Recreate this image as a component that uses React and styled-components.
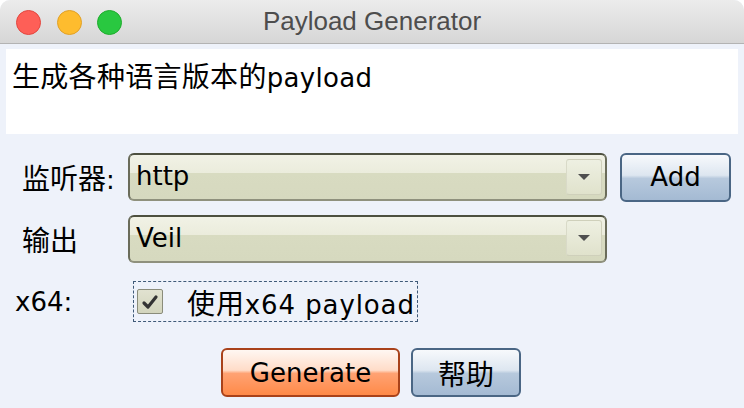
import React from 'react';
import styled, { createGlobalStyle } from 'styled-components';

const GlobalStyle = createGlobalStyle`
  html, body {
    margin: 0;
    padding: 0;
    background: #ffffff;
  }
  body {
    font-family: "DejaVu Sans", "Noto Sans CJK SC", sans-serif;
    font-size: 26px;
    color: #000;
  }
`;

const StyledWindow = styled.div`
  width: 744px;
  height: 408px;
  background: #eef2fa;
  border-radius: 10px 10px 0 0;
  overflow: hidden;
  display: flex;
  flex-direction: column;
`;

const StyledTitleBar = styled.div`
  height: 43px;
  flex-shrink: 0;
  position: relative;
  display: flex;
  align-items: center;
  justify-content: center;
  background: linear-gradient(#ececec, #d6d6d6);
  border-bottom: 1px solid #b3b3b3;
`;

const StyledLights = styled.div`
  position: absolute;
  left: 16px;
  top: 10px;
  display: flex;
  gap: 15.5px;
`;

const StyledLight = styled.span`
  width: 23px;
  height: 23px;
  border-radius: 50%;
  background: ${(props) => props.fill};
  border: 1px solid ${(props) => props.edge};
`;

const StyledTitle = styled.span`
  font-family: "Liberation Sans", Arial, sans-serif;
  font-size: 26px;
  color: #4d4d4d;
`;

const StyledDescription = styled.div`
  margin: 5px 6px 0;
  height: 85px;
  background: #ffffff;
  padding: 9px 6px 0;
  box-sizing: border-box;
  line-height: 34px;
  letter-spacing: 0.3px;
`;

const Cjk = styled.span`
  font-family: "Noto Sans CJK SC", sans-serif;
  font-size: 28px;
`;

const StyledForm = styled.div`
  display: flex;
  flex-direction: column;
`;

const StyledRow = styled.div`
  display: flex;
  align-items: center;
  height: ${(props) => props.height}px;
  margin-top: ${(props) => props.top}px;
`;

const StyledLabel = styled.span`
  width: ${(props) => 128 - props.indent}px;
  padding-left: ${(props) => props.indent}px;
  box-sizing: content-box;
  white-space: nowrap;
`;

const StyledCombo = styled.div`
  width: 479px;
  height: 48px;
  box-sizing: border-box;
  display: flex;
  align-items: center;
  justify-content: space-between;
  padding: 0 3px 2px 6px;
  border-radius: 6px;
  border: 2px solid #6a6c5a;
  border-top-color: #4d503f;
  border-bottom-color: #8f917d;
  background: linear-gradient(
    #f1f2e6 0%,
    #ebecdc 40%,
    #d8dbc1 42%,
    #d6d9bf 100%
  );
`;

const StyledArrowBox = styled.div`
  width: 36px;
  height: 36px;
  box-sizing: border-box;
  margin-top: 1px;
  display: flex;
  align-items: center;
  justify-content: center;
  border-radius: 3px;
  border: 1px solid #cfd0bb;
  border-left-color: #d9dac8;
  background: linear-gradient(#eef0e2, #e0e2cc);
`;

const StyledTriangle = styled.span`
  width: 0;
  height: 0;
  border-left: 6px solid transparent;
  border-right: 6px solid transparent;
  border-top: 6px solid #4f4f4f;
`;

const StyledButton = styled.button`
  height: 49px;
  width: ${(props) => props.width}px;
  box-sizing: border-box;
  padding: 0;
  margin: 0 0 0 ${(props) => props.gapLeft || 0}px;
  font-family: "DejaVu Sans", "Noto Sans CJK SC", sans-serif;
  font-size: 26px;
  color: #000;
  border-radius: 6px;
  border: 2px solid ${(props) => (props.primary ? '#a9421a' : '#4a6684')};
  background: ${(props) =>
    props.primary
      ? 'linear-gradient(#fff7f2 0%, #ffdcc8 45%, #ffa273 52%, #ff8a48 100%)'
      : 'linear-gradient(#f7f9fc 0%, #dde6f0 45%, #b7c9dd 52%, #a4bad3 100%)'};
  display: flex;
  align-items: center;
  justify-content: center;
`;

const StyledCheckArea = styled.div`
  width: 285px;
  height: 41px;
  box-sizing: border-box;
  margin-left: ${(props) => props.offset}px;
  border: 1px dashed #3f5a78;
  display: flex;
  align-items: center;
  padding-left: 3px;
  gap: 24px;
  letter-spacing: 0.9px;
`;

const StyledCheckbox = styled.span`
  width: 26px;
  height: 25px;
  box-sizing: border-box;
  border: 1.5px solid #8a8c7a;
  border-radius: 2px;
  background: linear-gradient(#e1e2d0, #d3d5bd);
  display: flex;
  align-items: center;
  justify-content: center;
`;

const StyledActions = styled.div`
  display: flex;
  justify-content: center;
  gap: 11px;
  margin-top: 26px;
  padding-right: 2px;
`;

const Combo = ({ value }) => (
  <StyledCombo>
    <span>{value}</span>
    <StyledArrowBox>
      <StyledTriangle />
    </StyledArrowBox>
  </StyledCombo>
);

const App = () => (
  <>
    <GlobalStyle />
    <StyledWindow>
      <StyledTitleBar>
        <StyledLights>
          <StyledLight fill="#fe5f57" edge="#e2463f" />
          <StyledLight fill="#febc2e" edge="#e0a027" />
          <StyledLight fill="#29c840" edge="#1fac2d" />
        </StyledLights>
        <StyledTitle>Payload Generator</StyledTitle>
      </StyledTitleBar>

      <StyledDescription>
        <Cjk>生成各种语言版本的</Cjk>payload
      </StyledDescription>

      <StyledForm>
        <StyledRow top={19} height={48}>
          <StyledLabel indent={22}>
            <Cjk>监听器</Cjk>:
          </StyledLabel>
          <Combo value="http" />
          <StyledButton width={111} gapLeft={13}>
            Add
          </StyledButton>
        </StyledRow>

        <StyledRow top={13} height={49}>
          <StyledLabel indent={22}>
            <Cjk>输出</Cjk>
          </StyledLabel>
          <Combo value="Veil" />
        </StyledRow>

        <StyledRow top={18} height={41}>
          <StyledLabel indent={15}>x64:</StyledLabel>
          <StyledCheckArea offset={5}>
            <StyledCheckbox>
              <svg width="18" height="16" viewBox="0 0 18 16">
                <path
                  d="M3 9 L7 13 L15 3"
                  fill="none"
                  stroke="#333333"
                  strokeWidth="3.2"
                  strokeLinecap="round"
                  strokeLinejoin="round"
                />
              </svg>
            </StyledCheckbox>
            <span>
              <Cjk>使用</Cjk>x64 payload
            </span>
          </StyledCheckArea>
        </StyledRow>

        <StyledActions>
          <StyledButton primary width={179}>
            Generate
          </StyledButton>
          <StyledButton width={110}>
            <Cjk>帮助</Cjk>
          </StyledButton>
        </StyledActions>
      </StyledForm>
    </StyledWindow>
  </>
);

export default App;
